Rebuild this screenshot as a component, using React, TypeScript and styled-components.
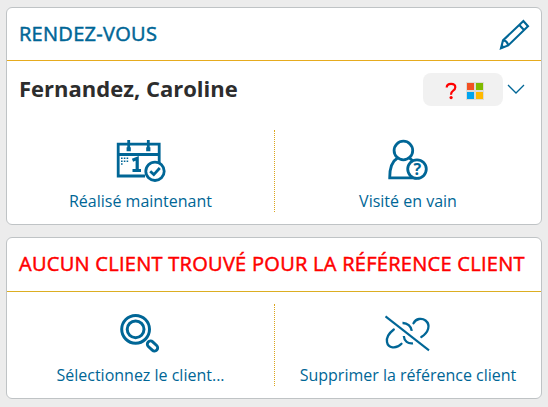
import React from 'react';
import styled, { createGlobalStyle } from 'styled-components';

const blue = '#006696';

const Global = createGlobalStyle`
  * { box-sizing: border-box; }
  body { margin: 0; background: #ececec; overflow: hidden; }
`;

const Page = styled.main`
  width: 548px;
  height: 407px;
  padding: 7px 6px;
  display: flex;
  flex-direction: column;
  gap: 12px;
  background: #ececec;
  font-family: 'Open Sans', 'Noto Sans', sans-serif;
`;

const Card = styled.section<{ $height: number }>`
  width: 536px;
  height: ${p => p.$height}px;
  background: #fff;
  border: 1px solid #bfc3c5;
  border-radius: 6px;
`;

const Header = styled.header<{ $height: number; $line: string }>`
  height: ${p => p.$height}px;
  padding: 0 11px 0 12px;
  display: flex;
  align-items: center;
  justify-content: space-between;
  border-bottom: 1px solid ${p => p.$line};
`;

const Title = styled.h2<{ $alert?: boolean }>`
  margin: 0;
  padding-bottom: ${p => (p.$alert ? 2 : 0)}px;
  font-size: 20px;
  line-height: 28px;
  font-weight: 400;
  white-space: nowrap;
  letter-spacing: 0.28px;
  color: ${p => (p.$alert ? '#f00' : blue)};
  -webkit-text-stroke: 0.5px currentColor;
`;

const PersonRow = styled.div`
  height: 69px;
  padding: 12px 16px 0 12px;
  display: flex;
  align-items: flex-start;
`;

const PersonName = styled.div`
  flex: 1;
  font-size: 22px;
  line-height: 30px;
  font-weight: 700;
  color: #2d2d2d;
`;

const Status = styled.div`
  width: 80px;
  height: 33px;
  border-radius: 8px;
  background: #f1f1f1;
`;

const Chevron = styled.svg`
  margin: 10px 0 0 4px;
`;

const Actions = styled.div<{ $top?: number }>`
  height: 82px;
  margin-top: ${p => p.$top ?? 0}px;
  display: grid;
  grid-template-columns: 268px 266px;
`;

const Action = styled.button<{ $divided?: boolean }>`
  height: 82px;
  padding: 0;
  border: 0;
  border-right: ${p => (p.$divided ? '1px dotted #dba51c' : '0')};
  background: none;
  display: flex;
  flex-direction: column;
  align-items: center;
  font: 400 16px/22px 'Open Sans', 'Noto Sans', sans-serif;
  color: ${blue};
  white-space: nowrap;
`;

const Glyph = styled.svg`
  flex: none;
  display: block;
  fill: none;
  stroke: ${blue};
  stroke-width: 2.8;
`;

const Mark = styled.text<{ $size: number }>`
  font: 700 ${p => p.$size}px 'Open Sans', sans-serif;
  fill: ${blue};
  stroke: none;
  text-anchor: middle;
`;

const PencilIcon = () => (
  <svg width="32" height="32" viewBox="0 0 32 32" fill="none" stroke={blue} strokeWidth="2.1" strokeLinejoin="miter">
    <path d="M3 30.2 5 22.4 25.4 3 30 8.2 10.2 27.4Z M5 22.4 Q9 22.5 10.2 27.4 M21.3 7 26 12" />
    <path d="M2 31 4 26.3 6.7 29Z" fill={blue} stroke="none" />
  </svg>
);

const StatusIcons = () => (
  <svg width="80" height="33" viewBox="0 0 80 33">
    <path d="M23.7 14.4Q23.7 10.8 28.1 10.8Q32.3 10.8 32.3 14.2Q32.3 16.3 29.9 17.9Q28 19 28 21.8" fill="none" stroke="#f00" strokeWidth="2.2" />
    <circle cx="28.1" cy="24.6" r="1.6" fill="#f00" />
    <path fill="#dedbd5" d="M43 9h18v18H43z" />
    <path fill="#f25022" d="M44 10h7v7h-7z" />
    <path fill="#7fba00" d="M53 10h7v7h-7z" />
    <path fill="#00a4ef" d="M44 19h7v7h-7z" />
    <path fill="#ffb900" d="M53 19h7v7h-7z" />
  </svg>
);

const CalendarIcon = () => (
  <Glyph width="71" height="60" viewBox="0 0 71 60">
    <path d="M40 46H13.2V14.2H54.2V33M13 24.5H54" />
    <path d="M23.7 10V20M43.3 10V20" />
    <path d="M23.7 17.3V21.3M43.3 17.3V21.3" strokeWidth="4.2" />
    <path d="M16 28.3H24M16 31.2H24M16 34.1H18.5" strokeWidth="1.5" strokeDasharray="1.6 1.2" />
    <path d="M27.5 30.2 32.2 28.3V40M27.5 40.5H36" strokeWidth="3.2" />
    <circle cx="50" cy="41.3" r="9.2" fill="#fff" />
    <path d="M45.2 41.2 48.8 44.6 54.8 38" />
  </Glyph>
);

const VisitorIcon = () => (
  <Glyph width="70" height="60" viewBox="-2 0 70 60">
    <circle cx="28.4" cy="20.5" r="9.3" />
    <path d="M22.8 27.7C16.5 31.5 14.6 39 14.7 47.8H42M34 27.7 38 31" />
    <circle cx="42" cy="39.1" r="9.3" fill="#fff" />
    <Mark x="42.3" y="45" $size={16}>?</Mark>
  </Glyph>
);

const SearchIcon = () => (
  <Glyph width="71" height="60" viewBox="0 -1 71 60">
    <circle cx="30.6" cy="24.3" r="13.9" strokeWidth="3" />
    <circle cx="30.6" cy="24.3" r="8.4" strokeWidth="3" />
    <rect x="-5.9" y="-3.2" width="11.8" height="6.4" rx="3.2" transform="translate(47.5 41) rotate(43)" strokeWidth="2.9" />
  </Glyph>
);

const UnlinkIcon = () => (
  <Glyph width="70" height="60" viewBox="-2 -1 70 60" strokeLinecap="round">
    <path d="M10.5 11.4 54 45.3" strokeWidth="2.1" strokeLinecap="butt" />
    <path d="M18.8 24.5C13.5 28.5 11.3 33 12 37C13 43.2 21 44.5 26.5 38.8" strokeWidth="2.3" />
    <path d="M38.5 18.2C41 13.3 47 12.8 50.5 15.5C56 20 53.5 27.5 46.3 32" strokeWidth="2.3" />
    <path d="M27.5 18C32.3 17.8 36.2 21.5 36.8 25.8M28.8 31C29.2 36.3 33 39 38 38.3" strokeWidth="2.3" strokeLinecap="butt" />
  </Glyph>
);

export default function App() {
  return (
    <Page>
      <Global />
      <Card $height={218}>
        <Header $height={53} $line="#e6ab1e">
          <Title>RENDEZ-VOUS</Title>
          <PencilIcon />
        </Header>
        <PersonRow>
          <PersonName>Fernandez, Caroline</PersonName>
          <Status><StatusIcons /></Status>
          <Chevron width="18" height="12" viewBox="0 0 18 12" fill="none" stroke={blue} strokeWidth="1.3">
            <path d="M1 2 9 10 17 2" />
          </Chevron>
        </PersonRow>
        <Actions>
          <Action $divided><CalendarIcon />Réalisé maintenant</Action>
          <Action><VisitorIcon />Visité en vain</Action>
        </Actions>
      </Card>
      <Card $height={162}>
        <Header $height={54} $line="#dcae22">
          <Title $alert>AUCUN CLIENT TROUVÉ POUR LA RÉFÉRENCE CLIENT</Title>
        </Header>
        <Actions $top={12}>
          <Action $divided><SearchIcon />Sélectionnez le client...</Action>
          <Action><UnlinkIcon />Supprimer la référence client</Action>
        </Actions>
      </Card>
    </Page>
  );
}
